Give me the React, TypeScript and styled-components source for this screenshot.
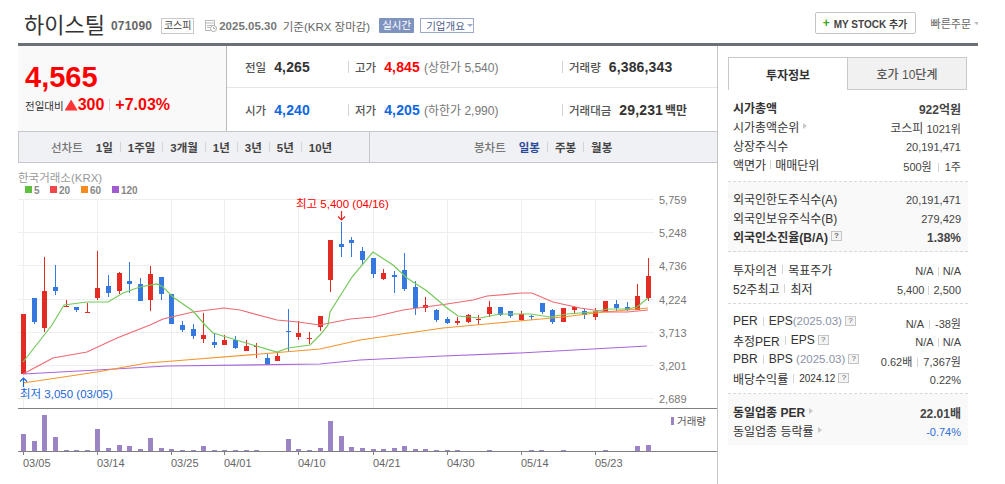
import React from 'react';
import styled, { createGlobalStyle } from 'styled-components';

const Global = createGlobalStyle`
  html, body { margin: 0; padding: 0; background: #fff; }
  body { font-family: "Liberation Sans", "Noto Sans CJK KR", sans-serif; color: #333; }
  * { box-sizing: border-box; }
`;

const Page = styled.div`
  width: 960px;
  height: 484px;
  margin-left: 18px;
  overflow: hidden;
`;
const Header = styled.header`
  height: 43px;
  display: flex;
  align-items: center;
  padding: 8px 0 0 6px;
  border-bottom: 0;
  font-size: 12px;
`;
const Name = styled.h1`
  margin: -5px 0 0;
  font-size: 22px;
  font-weight: 400;
  color: #333;
`;
const Code = styled.span`
  margin: 0 0 0 6px;
  font-size: 12px;
  font-weight: 700;
  color: #666;
  letter-spacing: 0.2px;
`;
const Market = styled.span`
  width: 33px;
  height: 16px;
  margin-left: 9px;
  border: 1px solid #c9c9c9;
  font-size: 10px;
  line-height: 13px;
  text-align: center;
  color: #444;
`;
const DateIcon = styled.svg`
  margin-left: 11px;
  flex: none;
`;
const DateText = styled.span`
  margin-left: 2px;
  font-size: 11.5px;
  font-weight: 700;
  color: #777;
`;
const Basis = styled.span`
  margin-left: 6px;
  font-size: 11.5px;
  color: #666;
`;
const Live = styled.span`
  width: 35px;
  height: 15px;
  margin-left: 9px;
  border-radius: 1px;
  background: #7f93bf;
  color: #fff;
  font-size: 10.5px;
  line-height: 15px;
  text-align: center;
`;
const Overview = styled.span`
  display: flex;
  align-items: center;
  gap: 2px;
  width: 54px;
  height: 15px;
  margin-left: 6px;
  padding-left: 5px;
  border: 1px solid #9aa9cc;
  color: #4a5d8e;
  font-size: 10.5px;
  white-space: nowrap;
`;
const Caret = styled.i<{ $color?: string }>`
  display: inline-block;
  width: 0;
  height: 0;
  border-left: 3px solid transparent;
  border-right: 3px solid transparent;
  border-top: 3px solid ${p => p.$color || '#9aa9cc'};
`;
const Spacer = styled.div`
  flex: 1;
`;
const StockBtn = styled.button`
  display: flex;
  align-items: center;
  justify-content: center;
  gap: 4px;
  width: 101px;
  height: 22px;
  margin-top: -5px;
  padding: 0;
  background: #fff;
  border: 1px solid #c4c4c4;
  border-radius: 2px;
  font: 700 10px "Liberation Sans", "Noto Sans CJK KR", sans-serif;
  color: #444;
`;
const Plus = styled.b`
  color: #3fa617;
  font-size: 12px;
`;
const Quick = styled.span`
  display: flex;
  align-items: center;
  gap: 3px;
  margin: -5px -2px 0 15px;
  font-size: 11px;
  color: #666;
`;
const Bar = styled.div`
  height: 3px;
  background: #6a6f78;
`;
const Body = styled.div`
  display: flex;
  height: 438px;
`;
const Left = styled.section`
  width: 700px;
  border-right: 1px solid #c4c4c4;
  flex: none;
`;
const Summary = styled.div`
  display: flex;
  height: 85px;
`;
const PriceBox = styled.div`
  width: 209px;
  padding: 14px 0 0 7px;
  background: #f9f9fa;
  border-right: 1px solid #bdbdbd;
`;
const Price = styled.div`
  font-size: 29px;
  font-weight: 700;
  line-height: 34px;
  color: #f00;
`;
const Change = styled.div`
  display: flex;
  align-items: center;
  margin-top: 2px;
  color: #f00;
  font-size: 16px;
  font-weight: 700;
`;
const ChangeLabel = styled.span`
  margin-right: 1px;
  color: #333;
  font-size: 10.5px;
  font-weight: 400;
`;
const Up = styled.i`
  width: 13px;
  height: 11px;
  background: #f33;
  clip-path: polygon(50% 0, 100% 100%, 0 100%);
`;
const Sep = styled.i<{ $h?: number; $m?: number }>`
  display: inline-block;
  width: 1px;
  height: ${p => p.$h || 11}px;
  margin: 0 ${p => p.$m ?? 5}px;
  background: #d4d4d4;
  vertical-align: middle;
`;
const Quotes = styled.div`
  flex: 1;
  display: grid;
  grid-template-rows: 42px 43px;
`;
const QuoteRow = styled.div<{ $last?: boolean }>`
  display: grid;
  grid-template-columns: 103px 214px 1fr;
  align-items: center;
  padding-left: 18px;
  border-bottom: ${p => (p.$last ? '0' : '1px solid #e6e6e6')};
`;
const Cell = styled.div<{ $line?: boolean }>`
  display: flex;
  align-items: center;
  height: 12px;
  padding-left: ${p => (p.$line ? '6px' : '0')};
  border-left: ${p => (p.$line ? '1px solid #d4d4d4' : '0')};
  white-space: nowrap;
`;
const QLabel = styled.span`
  margin-right: 8px;
  font-size: 11.5px;
  font-weight: 500;
  color: #555;
`;
const QValue = styled.b<{ $color?: string }>`
  font-size: 14px;
  letter-spacing: 0.15px;
  color: ${p => p.$color || '#333'};
`;
const Limit = styled.span`
  margin-left: 4px;
  font-size: 12px;
  color: #777;
`;
const Unit = styled.span`
  margin-left: 2px;
  font-size: 12px;
  font-weight: 700;
  color: #444;
`;
const Toolbar = styled.nav`
  display: grid;
  grid-template-columns: 350px 1fr;
  height: 32px;
  background: #f0f1f4;
  border: solid #c5c7cc;
  border-width: 1px 0 1px 1px;
`;
const ToolGroup = styled.div<{ $right?: boolean }>`
  display: flex;
  align-items: center;
  padding-left: ${p => (p.$right ? '104px' : '32px')};
  border-left: ${p => (p.$right ? '1px solid #c5c7cc' : '0')};
  white-space: nowrap;
`;
const ToolTitle = styled.span`
  margin-right: 13px;
  font-size: 11.5px;
  font-weight: 500;
  color: #777;
`;
const ToolItem = styled.span<{ $on?: boolean }>`
  font-size: 11.5px;
  font-weight: 700;
  color: ${p => (p.$on ? '#2b4b9b' : '#444')};
`;
const ChartSvg = styled.svg`
  display: block;
  font-family: "Liberation Sans", "Noto Sans CJK KR", sans-serif;
`;
const Right = styled.aside`
  flex: 1;
  padding: 11px 0 0 10px;
`;
const Tabs = styled.div`
  display: grid;
  grid-template-columns: 119px 120px;
  width: 239px;
  height: 33px;
  margin-bottom: 8px;
`;
const Tab = styled.div<{ $on?: boolean }>`
  display: flex;
  align-items: center;
  justify-content: center;
  font-size: 12px;
  font-weight: ${p => (p.$on ? 700 : 500)};
  color: ${p => (p.$on ? '#333' : '#555')};
  background: ${p => (p.$on ? '#fff' : '#f1f1f1')};
  border: 1px solid #c9c9c9;
  border-bottom-width: ${p => (p.$on ? 0 : 1)}px;
  border-right-width: ${p => (p.$on ? 0 : 1)}px;
`;
const Group = styled.div<{ $top: number; $bottom: number; $shade?: boolean; $end?: boolean }>`
  width: 240px;
  padding: ${p => p.$top}px 7px ${p => p.$bottom}px 5px;
  background: ${p => (p.$shade ? '#f9f9f9' : '#fff')};
  border-bottom: ${p => (p.$end ? '0' : '1px dashed #d8d8d8')};
`;
const Row = styled.div`
  display: flex;
  justify-content: space-between;
  align-items: center;
  height: 19px;
  white-space: nowrap;
`;
const Label = styled.span<{ $strong?: boolean }>`
  display: flex;
  align-items: center;
  font-size: 12px;
  font-weight: ${p => (p.$strong ? 700 : 400)};
  color: #333;
  margin-top: -1px;
`;
const Value = styled.span<{ $strong?: boolean; $color?: string }>`
  margin-top: 2px;
  font-size: ${p => (p.$strong ? 12 : 11)}px;
  font-weight: ${p => (p.$strong ? 700 : 400)};
  color: ${p => p.$color || '#444'};
`;
const Han = styled.span`
  font-size: 12px;
`;
const Muted = styled.span`
  color: #8b93a8;
  font-size: 11.5px;
`;
const Small = styled.span`
  font-size: 10px;
`;
const Help = styled.i`
  display: inline-flex;
  align-items: center;
  justify-content: center;
  width: 11px;
  height: 10px;
  margin-left: 3px;
  border: 1px solid #c4c4c4;
  background: #f4f4f4;
  color: #666;
  font-style: normal;
  font-size: 8px;
  line-height: 8px;
`;
const More = styled.i`
  width: 0;
  height: 0;
  margin-left: 4px;
  border-top: 3px solid transparent;
  border-bottom: 3px solid transparent;
  border-left: 4px solid #c9c9c9;
`;

type Candle = [number, number, number, number, number, 'r' | 'b'];

// x, wick top, wick bottom, body top, body bottom
const candles: Candle[] = [
  [23, 314, 374, 314, 374, 'r'], [34, 298, 324, 298, 322, 'b'], [44, 257, 332, 291, 328, 'r'],
  [55, 265, 295, 287, 291, 'b'], [66, 300, 307, 306, 307, 'r'], [76, 307, 312, 307, 310, 'b'],
  [87, 303, 313, 312, 313, 'r'], [97, 251, 300, 288, 298, 'r'], [108, 275, 297, 286, 293, 'b'],
  [119, 272, 294, 273, 291, 'r'], [129, 262, 293, 281, 284, 'b'], [140, 278, 301, 284, 301, 'b'],
  [150, 266, 311, 274, 300, 'r'], [161, 277, 300, 277, 294, 'b'], [171, 294, 324, 294, 324, 'b'],
  [182, 321, 332, 325, 330, 'b'], [193, 324, 339, 329, 336, 'b'], [203, 313, 343, 335, 339, 'r'],
  [214, 333, 348, 342, 345, 'b'], [224, 335, 345, 340, 345, 'r'], [235, 336, 349, 340, 348, 'b'],
  [246, 340, 351, 346, 351, 'r'], [256, 343, 358, 346, 347, 'r'], [267, 353, 365, 358, 365, 'b'],
  [277, 353, 361, 356, 361, 'r'], [288, 309, 352, 331, 332, 'b'], [298, 321, 340, 333, 337, 'r'],
  [309, 332, 344, 338, 339, 'r'], [320, 316, 331, 316, 327, 'r'], [330, 240, 292, 240, 280, 'r'],
  [341, 222, 257, 244, 247, 'b'], [351, 237, 257, 240, 243, 'b'], [362, 247, 265, 251, 260, 'b'],
  [373, 258, 278, 258, 274, 'b'], [383, 269, 280, 273, 279, 'r'], [394, 271, 293, 275, 277, 'b'],
  [404, 253, 291, 270, 289, 'b'], [415, 281, 315, 287, 308, 'b'], [425, 297, 312, 305, 308, 'r'],
  [436, 309, 322, 310, 320, 'b'], [447, 317, 324, 319, 323, 'b'], [457, 317, 325, 321, 323, 'r'],
  [468, 314, 323, 315, 322, 'r'], [478, 315, 325, 319, 320, 'r'], [489, 301, 317, 307, 314, 'r'],
  [500, 307, 316, 307, 315, 'b'], [510, 311, 318, 311, 316, 'b'], [521, 311, 321, 314, 320, 'r'],
  [531, 315, 320, 316, 317, 'b'], [542, 303, 314, 303, 312, 'b'], [552, 309, 324, 310, 322, 'b'],
  [563, 308, 322, 308, 322, 'r'], [574, 306, 313, 307, 310, 'r'], [584, 309, 319, 311, 315, 'b'],
  [595, 308, 320, 311, 317, 'r'], [605, 301, 312, 301, 312, 'r'], [616, 300, 311, 304, 308, 'b'],
  [627, 302, 311, 307, 310, 'b'], [637, 284, 310, 296, 310, 'r'], [648, 258, 301, 276, 298, 'r'],
];

const ma5 = '23,362 52,325 64,305 87,302 108,302 123,293 140,287 157,284 163,287 173,297 193,311 205,325 213,333 233,339 253,345 277,352 288,348 310,345 320,335 328,325 330,312 352,277 373,252 393,265 407,278 427,291 447,308 458,316 480,318 500,314 530,314 550,317 567,314 593,312 607,309 627,309 637,307 648,298';
const ma20 = '23,374 53,358 87,352 117,338 150,325 163,319 193,312 224,308 240,310 277,320 298,322 320,325 350,319 373,317 403,310 447,304 473,300 487,296 522,293 532,293 553,302 580,308 607,312 627,312 648,310';
const ma60 = '23,383 97,372 147,363 173,361 260,354 320,349 360,340 443,328 497,323 563,317 595,313 648,308';
const ma120 = '23,374 97,370 167,366 320,364 360,360 443,356 520,353 647,346';

const volumes: [number, number][] = [
  [23, 434], [34, 441], [44, 415], [55, 437], [66, 450], [76, 450], [87, 450], [97, 429], [108, 448],
  [119, 445], [129, 446], [140, 449], [150, 438], [161, 448], [171, 449], [182, 450], [193, 450],
  [203, 446], [214, 450], [224, 450], [235, 450], [246, 450], [256, 450], [288, 439], [298, 449],
  [309, 450], [320, 448], [330, 421], [341, 436], [351, 447], [362, 448], [373, 449], [383, 449],
  [394, 448], [404, 446], [415, 449], [425, 449], [436, 450], [447, 450], [457, 450], [489, 450],
  [531, 450], [541, 450], [563, 450], [605, 450], [637, 446], [648, 445],
];

const gridY = [199, 232, 265, 299, 332, 365, 398];
const axis = ['5,759', '5,248', '4,736', '4,224', '3,713', '3,201', '2,689'];
const ticks: [number, string][] = [
  [23, '03/05'], [97, '03/14'], [171, '03/25'], [224, '04/01'], [298, '04/10'],
  [373, '04/21'], [447, '04/30'], [521, '05/14'], [595, '05/23'],
];
const legend: [number, string, string][] = [
  [25, '#5fbf3f', '5'], [50, '#f04848', '20'], [81, '#f58a1f', '60'], [112, '#a05bd0', '120'],
];

const Chart = () => (
  <ChartSvg width={699} height={321} viewBox="18 163 699 321">
    <text x={18} y={182} fontSize={11.5} fill="#999">한국거래소(KRX)</text>
    {legend.map(([x, c, t]) => (
      <g key={t}>
        <rect x={x} y={186} width={7} height={7} fill={c} />
        <text x={x + 9} y={194} fontSize={10} fontWeight={700} fill="#888">{t}</text>
      </g>
    ))}
    <g shapeRendering="crispEdges">
      {gridY.map(y => <rect key={y} x={18} y={y} width={636} height={1} fill="#eee" />)}
      {ticks.map(([x]) => <rect key={x} x={x} y={199} width={1} height={209} fill="#eee" />)}
    </g>
    {axis.map((t, i) => (
      <text key={t} x={659} y={gridY[i] + 5} fontSize={11} fill="#777">{t}</text>
    ))}
    <g shapeRendering="crispEdges">
      {candles.map(([x, wt, wb, bt, bb, c]) => {
        const col = c === 'r' ? '#e22b22' : '#3478e0';
        return (
          <g key={x} fill={col}>
            <rect x={x} y={wt} width={1} height={wb - wt} />
            <rect x={x - 2} y={bt} width={5} height={Math.max(bb - bt, 1)} />
          </g>
        );
      })}
    </g>
    <g fill="none" strokeWidth={1.2}>
      <polyline points={ma120} stroke="#a866d8" />
      <polyline points={ma60} stroke="#f5952c" />
      <polyline points={ma20} stroke="#ee6a72" />
      <polyline points={ma5} stroke="#74c95a" />
    </g>
    <text x={296} y={208} fontSize={11.5} fill="#f00">최고 5,400 (04/16)</text>
    <path d="M341.5 211v9M338 216.5l3.5 3.5 3.5-3.5" fill="none" stroke="#e22" strokeWidth={1.2} />
    <path d="M23.5 387v-9M20 381.5l3.5-3.5 3.5 3.5" fill="none" stroke="#1a66d8" strokeWidth={1.2} />
    <text x={20} y={398} fontSize={11.5} fill="#1a66d8">최저 3,050 (03/05)</text>
    <g shapeRendering="crispEdges">
      <rect x={18} y={408} width={699} height={1} fill="#808080" />
      {volumes.map(([x, y]) => (
        <rect key={x} x={x - 2} y={y} width={5} height={451 - y} fill="#9a84c4" />
      ))}
      <rect x={18} y={451} width={699} height={1} fill="#808080" />
      {ticks.map(([x]) => <rect key={x} x={x} y={451} width={1} height={4} fill="#808080" />)}
      <rect x={671} y={417} width={3} height={8} fill="#9a84c4" />
    </g>
    <text x={677} y={425} fontSize={10.5} fill="#555">거래량</text>
    {ticks.map(([x, t]) => (
      <text key={t} x={x} y={467} fontSize={11} fill="#666">{t}</text>
    ))}
  </ChartSvg>
);

const lineTabs = ['1일', '1주일', '3개월', '1년', '3년', '5년', '10년'];

export default function App() {
  return (
    <Page>
      <Global />
      <Header>
        <Name>하이스틸</Name>
        <Code>071090</Code>
        <Market>코스피</Market>
        <DateIcon width={12} height={13} viewBox="0 0 12 13">
          <rect x="0.5" y="1.5" width="9" height="10" fill="#fff" stroke="#bbb" />
          <path d="M0.5 4h9M2 6.5h6M2 8.5h3" stroke="#bbb" />
          <circle cx="8.5" cy="9.5" r="3" fill="#fff" stroke="#aaa" />
          <path d="M8.5 8v1.5h1.5" stroke="#aaa" fill="none" />
        </DateIcon>
        <DateText>2025.05.30</DateText>
        <Basis>기준(KRX 장마감)</Basis>
        <Live>실시간</Live>
        <Overview>기업개요<Caret /></Overview>
        <Spacer />
        <StockBtn><Plus>+</Plus>MY STOCK 추가</StockBtn>
        <Quick>빠른주문<Caret $color="#bbb" /></Quick>
      </Header>
      <Bar />
      <Body>
        <Left>
          <Summary>
            <PriceBox>
              <Price>4,565</Price>
              <Change>
                <ChangeLabel>전일대비</ChangeLabel>
                <Up />
                300
                <Sep $h={12} $m={5} />
                +7.03%
              </Change>
            </PriceBox>
            <Quotes>
              <QuoteRow>
                <Cell><QLabel>전일</QLabel><QValue>4,265</QValue></Cell>
                <Cell $line><QLabel>고가</QLabel><QValue $color="#f00">4,845</QValue><Limit>(상한가 5,540)</Limit></Cell>
                <Cell $line><QLabel>거래량</QLabel><QValue>6,386,343</QValue></Cell>
              </QuoteRow>
              <QuoteRow $last>
                <Cell><QLabel>시가</QLabel><QValue $color="#1066e0">4,240</QValue></Cell>
                <Cell $line><QLabel>저가</QLabel><QValue $color="#1066e0">4,205</QValue><Limit>(하한가 2,990)</Limit></Cell>
                <Cell $line><QLabel>거래대금</QLabel><QValue>29,231</QValue><Unit>백만</Unit></Cell>
              </QuoteRow>
            </Quotes>
          </Summary>
          <Toolbar>
            <ToolGroup>
              <ToolTitle>선차트</ToolTitle>
              {lineTabs.map((t, i) => (
                <React.Fragment key={t}>
                  {i > 0 && <Sep $h={10} $m={7} />}
                  <ToolItem>{t}</ToolItem>
                </React.Fragment>
              ))}
            </ToolGroup>
            <ToolGroup $right>
              <ToolTitle>봉차트</ToolTitle>
              <ToolItem $on>일봉</ToolItem>
              <Sep $h={10} $m={7} />
              <ToolItem>주봉</ToolItem>
              <Sep $h={10} $m={7} />
              <ToolItem>월봉</ToolItem>
            </ToolGroup>
          </Toolbar>
          <Chart />
        </Left>
        <Right>
          <Tabs>
            <Tab $on>투자정보</Tab>
            <Tab>호가 10단계</Tab>
          </Tabs>
          <Group $top={0} $bottom={7}>
            <Row><Label $strong>시가총액</Label><Value $strong>922억원</Value></Row>
            <Row><Label>시가총액순위<More /></Label><Value><Han>코스피</Han> 1021위</Value></Row>
            <Row><Label>상장주식수</Label><Value>20,191,471</Value></Row>
            <Row><Label>액면가<Sep $h={9} $m={4} />매매단위</Label><Value>500원<Sep $h={9} $m={6} />1주</Value></Row>
          </Group>
          <Group $top={7} $bottom={5} $shade>
            <Row><Label>외국인한도주식수(A)</Label><Value>20,191,471</Value></Row>
            <Row><Label>외국인보유주식수(B)</Label><Value>279,429</Value></Row>
            <Row><Label $strong>외국인소진율(B/A)<Help>?</Help></Label><Value $strong>1.38%</Value></Row>
          </Group>
          <Group $top={8} $bottom={5}>
            <Row><Label>투자의견<Sep $h={9} $m={5} />목표주가</Label><Value>N/A<Sep $h={9} $m={4} />N/A</Value></Row>
            <Row><Label>52주최고<Sep $h={9} $m={5} />최저</Label><Value>5,400<Sep $h={9} $m={4} />2,500</Value></Row>
          </Group>
          <Group $top={8} $bottom={5}>
            <Row><Label>PER<Sep $h={9} $m={5} />EPS<Muted>(2025.03)</Muted><Help>?</Help></Label><Value>N/A<Sep $h={9} $m={5} />-38원</Value></Row>
            <Row><Label>추정PER<Sep $h={9} $m={5} />EPS<Help>?</Help></Label><Value>N/A<Sep $h={9} $m={4} />N/A</Value></Row>
            <Row><Label>PBR<Sep $h={9} $m={5} />BPS&nbsp;<Muted>(2025.03)</Muted><Help>?</Help></Label><Value>0.62배<Sep $h={9} $m={5} />7,367원</Value></Row>
            <Row><Label>배당수익률<Sep $h={9} $m={5} /><Small>2024.12</Small><Help>?</Help></Label><Value>0.22%</Value></Row>
          </Group>
          <Group $top={8} $bottom={5} $shade $end>
            <Row><Label $strong>동일업종 PER<More /></Label><Value $strong>22.01배</Value></Row>
            <Row><Label>동일업종 등락률<More /></Label><Value $color="#2f6fd8">-0.74%</Value></Row>
          </Group>
        </Right>
      </Body>
    </Page>
  );
}
